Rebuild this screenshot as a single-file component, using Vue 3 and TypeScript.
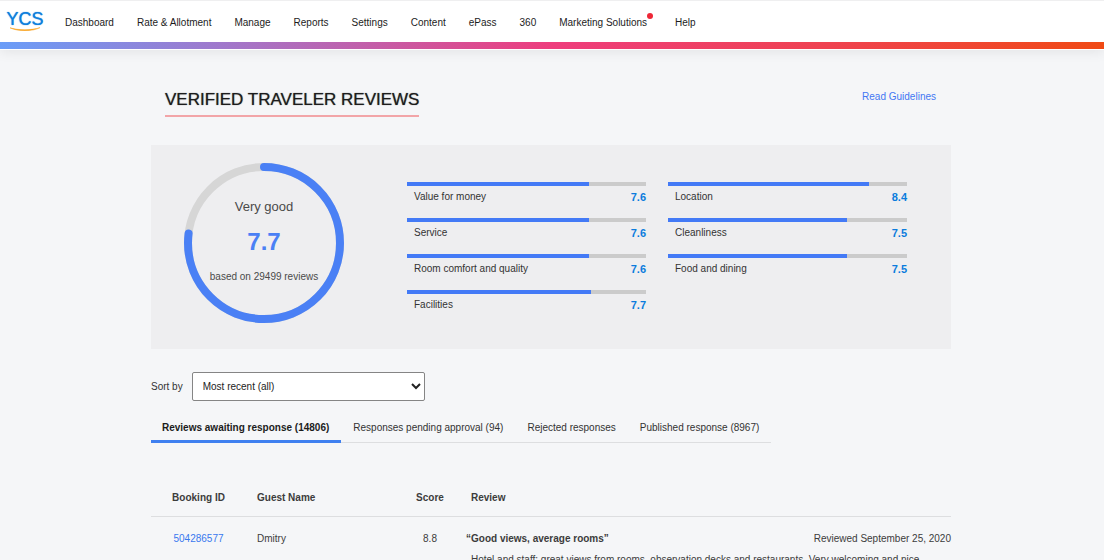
<script setup lang="ts">
import { ref } from 'vue'

interface NavItem {
  label: string
  isNew?: boolean
}

interface Category {
  name: string
  score: number
}

interface Review {
  bookingId: string
  guest: string
  score: string
  title: string
  date: string
  text: string
}

const navItems: NavItem[] = [
  { label: 'Dashboard' },
  { label: 'Rate & Allotment' },
  { label: 'Manage' },
  { label: 'Reports' },
  { label: 'Settings' },
  { label: 'Content' },
  { label: 'ePass' },
  { label: '360' },
  { label: 'Marketing Solutions', isNew: true },
  { label: 'Help' },
]

const categoryColumns: Category[][] = [
  [
    { name: 'Value for money', score: 7.6 },
    { name: 'Service', score: 7.6 },
    { name: 'Room comfort and quality', score: 7.6 },
    { name: 'Facilities', score: 7.7 },
  ],
  [
    { name: 'Location', score: 8.4 },
    { name: 'Cleanliness', score: 7.5 },
    { name: 'Food and dining', score: 7.5 },
  ],
]

const tabs: string[] = [
  'Reviews awaiting response (14806)',
  'Responses pending approval (94)',
  'Rejected responses',
  'Published response (8967)',
]
const activeTab = ref(0)

const sortBy = ref('Most recent (all)')
const sortOptions: string[] = ['Most recent (all)']

const reviews: Review[] = [
  {
    bookingId: '504286577',
    guest: 'Dmitry',
    score: '8.8',
    title: '“Good views, average rooms”',
    date: 'Reviewed September 25, 2020',
    text: 'Hotel and staff: great views from rooms, observation decks and restaurants. Very welcoming and nice',
  },
]
</script>

<template>
  <div class="page">
    <header class="topbar">
      <a class="logo" href="#" aria-label="YCS">
        <span class="logo-text">YCS</span>
        <svg class="logo-smile" viewBox="0 0 32 4" aria-hidden="true">
          <path d="M1 0.8 C9 3.4 23 3.4 31 0.6 C24 4.6 9 4.8 1 0.8 Z" fill="#f9a01b" stroke="#f9a01b" stroke-width="0.5" />
        </svg>
      </a>
      <nav class="nav" aria-label="Main">
        <a v-for="item in navItems" :key="item.label" class="nav-link" :class="{ wide: item.isNew }" href="#">
          {{ item.label }}<span v-if="item.isNew" class="dot"></span>
        </a>
      </nav>
    </header>

    <main class="content">
      <div class="heading">
        <h1 class="title">VERIFIED TRAVELER REVIEWS</h1>
        <a class="guidelines" href="#">Read Guidelines</a>
      </div>

      <section class="summary">
        <div class="gauge">
          <svg class="ring" viewBox="0 0 160 160" aria-hidden="true">
            <circle cx="80" cy="80" r="76" fill="none" stroke="#d6d6d6" stroke-width="8" />
            <circle
              cx="80" cy="80" r="76" fill="none" stroke="#4a80f5" stroke-width="8"
              stroke-linecap="round" pathLength="100" stroke-dasharray="77 100"
              transform="rotate(-90 80 80)"
            />
          </svg>
          <div class="gauge-label">
            <span class="verdict">Very good</span>
            <span class="overall">7.7</span>
            <span class="basis">based on 29499 reviews</span>
          </div>
        </div>
        <div class="categories">
          <ul v-for="(column, i) in categoryColumns" :key="i" class="category-list">
            <li v-for="c in column" :key="c.name" class="category">
              <div class="bar"><div class="fill" :style="{ width: c.score * 10 + '%' }"></div></div>
              <div class="category-row">
                <span>{{ c.name }}</span>
                <strong class="category-score">{{ c.score }}</strong>
              </div>
            </li>
          </ul>
        </div>
      </section>

      <div class="sort">
        <label for="sort-by">Sort by</label>
        <select id="sort-by" v-model="sortBy" class="sort-select">
          <option v-for="option in sortOptions" :key="option">{{ option }}</option>
        </select>
      </div>

      <div class="tabs" role="tablist">
        <button
          v-for="(tab, i) in tabs" :key="tab" type="button" role="tab"
          class="tab" :class="{ active: activeTab === i }"
          :aria-selected="activeTab === i" @click="activeTab = i"
        >{{ tab }}</button>
      </div>

      <table class="reviews">
        <thead>
          <tr>
            <th class="col-id">Booking ID</th>
            <th class="col-guest">Guest Name</th>
            <th class="col-score">Score</th>
            <th class="col-review">Review</th>
          </tr>
        </thead>
        <tbody>
          <tr v-for="r in reviews" :key="r.bookingId">
            <td class="col-id"><a class="booking" href="#">{{ r.bookingId }}</a></td>
            <td class="col-guest">{{ r.guest }}</td>
            <td class="col-score">{{ r.score }}</td>
            <td class="review">
              <div class="review-head">
                <strong>{{ r.title }}</strong>
                <span>{{ r.date }}</span>
              </div>
              <p class="review-text">{{ r.text }}</p>
            </td>
          </tr>
        </tbody>
      </table>
    </main>
  </div>
</template>

<style>
html,
body {
  margin: 0;
  background: #f5f6f8;
}

body {
  height: 100vh;
  overflow: hidden;
}
</style>

<style scoped>
.page {
  font-family: "Liberation Sans", Arial, sans-serif;
  font-size: 10px;
  line-height: 16px;
  color: #333;
}

a {
  color: inherit;
  text-decoration: none;
}

.topbar {
  position: relative;
  display: flex;
  align-items: center;
  height: 41px;
  padding: 0 0 7px 6px;
  background: #fff;
  border-top: 1px solid #efeff0;
  border-bottom: 1px solid #fff;
  box-shadow: 0 2px 12px rgba(0, 0, 0, 0.08);
}

.topbar::after {
  content: "";
  position: absolute;
  left: 0;
  right: 0;
  bottom: 0;
  height: 7px;
  background: linear-gradient(90deg, #6a9df8 0%, #a078cc 20%, #ee3d7d 50%, #ef4250 75%, #f04a14 100%);
}

.logo {
  display: flex;
  flex-direction: column;
  align-items: center;
  width: 38px;
  margin-right: 21px;
}

.logo-text {
  font-size: 18px;
  line-height: 15px;
  color: #0f7fdc;
  text-shadow: 0 0 1px #0f7fdc;
}

.logo-smile {
  width: 32px;
  height: 4px;
}

.nav {
  display: flex;
  gap: 23px;
  padding-top: 2px;
  color: #1c1c1c;
}

.nav-link {
  position: relative;
  white-space: nowrap;
}

.nav-link.wide {
  margin-right: 5px;
}

.dot {
  position: absolute;
  top: -2px;
  right: -6px;
  width: 6px;
  height: 6px;
  border-radius: 50%;
  background: #ee2737;
}

.content {
  max-width: 800px;
  margin: 0 auto;
  padding: 39px 2px 0 0;
}

.heading {
  display: flex;
  justify-content: space-between;
  align-items: flex-start;
  padding: 0 15px 0 14px;
}

.title {
  margin: 0;
  padding-bottom: 4px;
  font-size: 17px;
  line-height: 22px;
  font-weight: 400;
  color: #1c1c1c;
  text-shadow: 0 0 1px rgba(28, 28, 28, 0.7);
  border-bottom: 2px solid #f2a5a8;
}

.guidelines {
  color: #4377f3;
}

.summary {
  display: flex;
  align-items: flex-start;
  gap: 63px;
  margin-top: 28px;
  padding: 18px 44px 26px 33px;
  background: #eeeef0;
}

.gauge {
  display: grid;
  place-items: center;
  flex: none;
}

.gauge > * {
  grid-area: 1 / 1;
}

.ring {
  width: 160px;
  height: 160px;
}

.gauge-label {
  display: flex;
  flex-direction: column;
  align-items: center;
  gap: 14px;
  padding-bottom: 3px;
  color: #4a4a4a;
}

.verdict {
  font-size: 13px;
}

.overall {
  font-size: 24px;
  line-height: 26px;
  font-weight: 700;
  color: #4a80f5;
}

.categories {
  display: flex;
  flex: 1;
  gap: 22px;
  padding-top: 19px;
}

.category-list {
  flex: 1;
  display: flex;
  flex-direction: column;
  gap: 13px;
  margin: 0;
  padding: 0;
  list-style: none;
}

.bar {
  height: 4px;
  background: #cbcbcb;
}

.fill {
  height: 100%;
  background: #437af6;
}

.category-row {
  display: flex;
  justify-content: space-between;
  padding: 3px 0 0 7px;
}

.category-score {
  font-size: 11px;
  color: #0a7cdd;
}

.sort {
  display: flex;
  align-items: center;
  gap: 9px;
  margin-top: 23px;
}

.sort-select {
  width: 233px;
  height: 29px;
  padding: 0 0 0 6px;
  font: inherit;
  color: #222;
  background-color: #fff;
  border: 1px solid #858585;
  border-radius: 2px;
}

.tabs {
  display: inline-flex;
  margin-top: 18px;
  border-bottom: 1px solid #dddee0;
}

.tab {
  height: 24px;
  margin: 0 0 -1px;
  padding: 0 12px 4px;
  font: inherit;
  color: #333;
  background: none;
  border: 0;
  border-bottom: 3px solid transparent;
  cursor: pointer;
}

.tab:first-child {
  padding-left: 11px;
}

.tab.active {
  font-weight: 700;
  color: #1c1c1c;
  border-bottom-color: #3f80f0;
}

.reviews {
  width: 100%;
  margin-top: 37px;
  table-layout: fixed;
  border-collapse: collapse;
  color: #3c3c3c;
}

.reviews th {
  padding: 10px 0;
  font-weight: 700;
  text-align: left;
  border-bottom: 1px solid #dddee0;
}

.reviews td {
  padding: 14px 0 0;
  vertical-align: top;
}

.col-id {
  width: 95px;
}

.reviews .col-id {
  text-align: center;
}

.reviews .col-guest {
  width: 144px;
  padding-left: 11px;
}

.reviews .col-score {
  width: 58px;
  text-align: center;
}

.reviews .col-review {
  padding-left: 12px;
}

.booking {
  color: #3878ef;
}

.reviews .review {
  padding-left: 7px;
}

.review-head {
  display: flex;
  justify-content: space-between;
}

.review-text {
  margin: 5px 0 0 5px;
}
</style>
